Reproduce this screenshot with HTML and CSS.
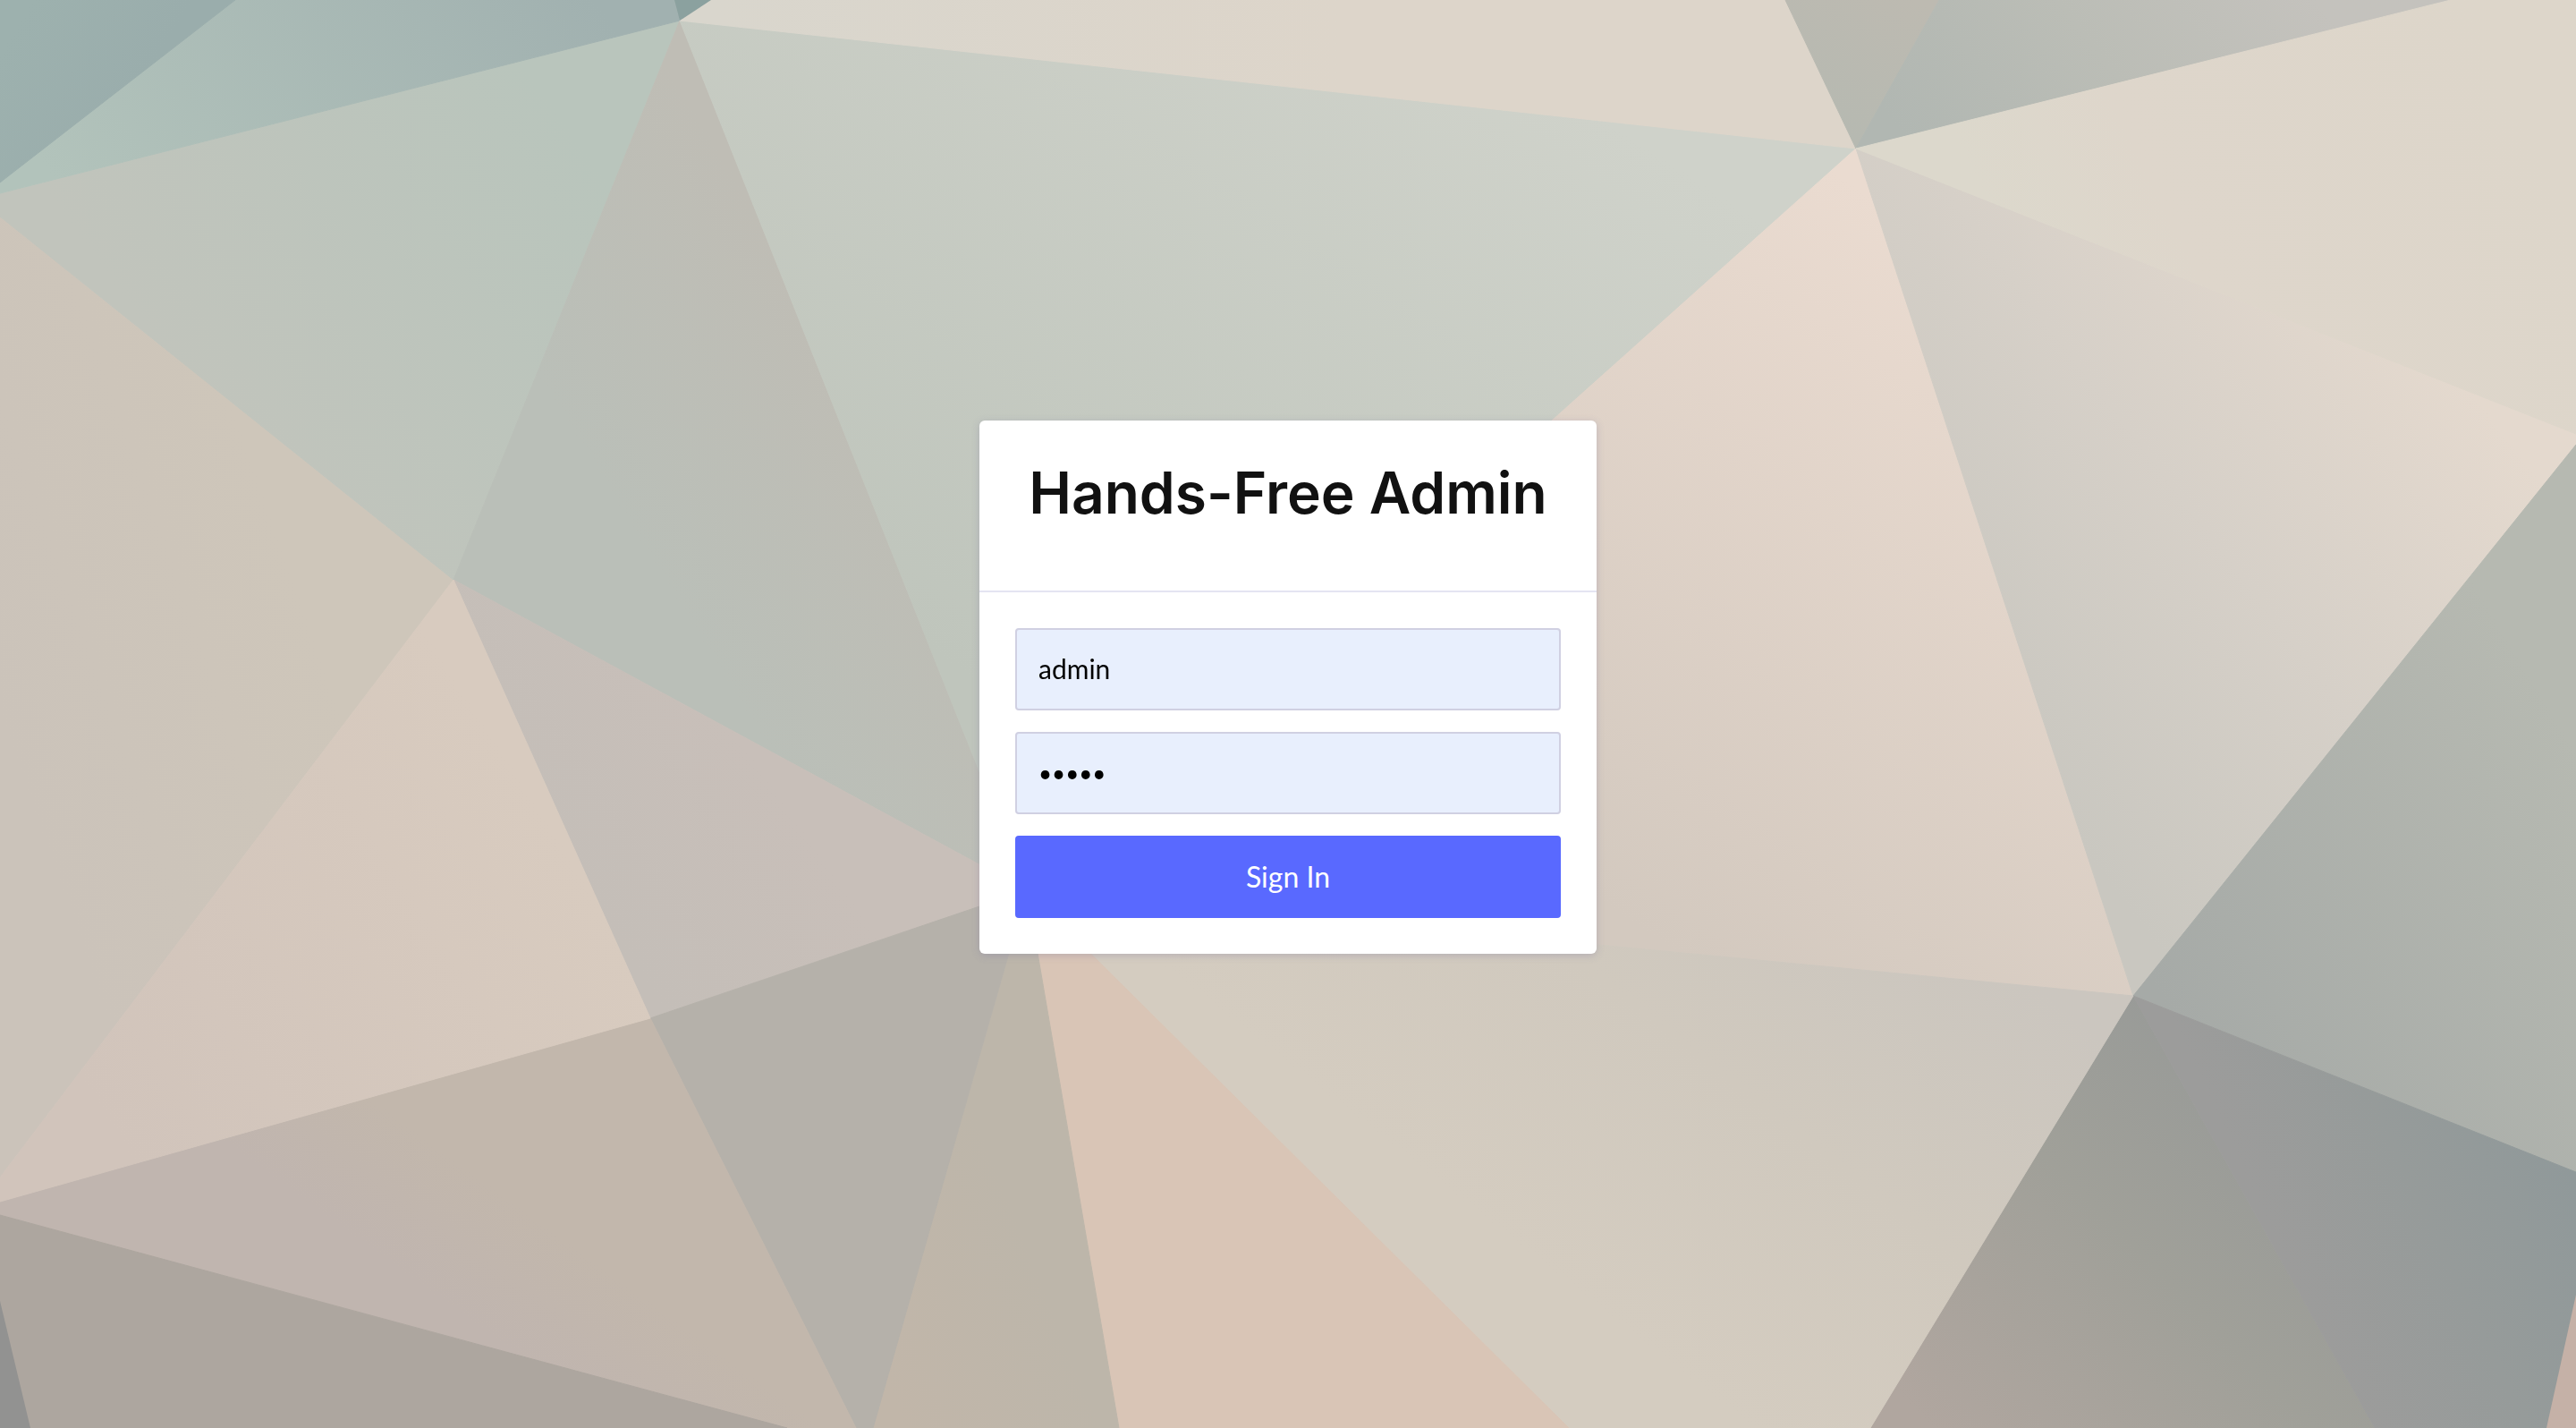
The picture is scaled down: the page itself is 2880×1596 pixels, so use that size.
FILE: index.html
```html
<!DOCTYPE html>
<html lang="en">
<head>
  <meta charset="utf-8">
  <meta name="viewport" content="width=device-width, initial-scale=1">
  <title>Hands-Free Admin</title>
  <link rel="stylesheet" href="styles.css">
</head>
<body>
  <svg class="backdrop" viewBox="0 0 2880 1596" preserveAspectRatio="xMidYMid slice" aria-hidden="true">
    <defs>
      <linearGradient id="g-a" gradientUnits="userSpaceOnUse" x1="0" y1="60" x2="130" y2="140"><stop offset="0" stop-color="#9db1ae"/><stop offset="1" stop-color="#9aadac"/></linearGradient>
      <linearGradient id="g-b" gradientUnits="userSpaceOnUse" x1="60" y1="200" x2="560" y2="-150"><stop offset="0" stop-color="#b2c3bb"/><stop offset="1" stop-color="#a1b1b0"/></linearGradient>
      <linearGradient id="g-d" gradientUnits="userSpaceOnUse" x1="200" y1="420" x2="620" y2="120"><stop offset="0" stop-color="#c1c4bc"/><stop offset="1" stop-color="#b9c5bc"/></linearGradient>
      <linearGradient id="g-e" gradientUnits="userSpaceOnUse" x1="0" y1="800" x2="340" y2="680"><stop offset="0" stop-color="#cbc3ba"/><stop offset="1" stop-color="#cec6ba"/></linearGradient>
      <linearGradient id="g-f" gradientUnits="userSpaceOnUse" x1="700" y1="580" x2="960" y2="420"><stop offset="0" stop-color="#babfb8"/><stop offset="1" stop-color="#bfbdb5"/></linearGradient>
      <linearGradient id="g-g" gradientUnits="userSpaceOnUse" x1="1000" y1="700" x2="1500" y2="-60"><stop offset="0" stop-color="#bfc5bc"/><stop offset="1" stop-color="#cfd2ca"/></linearGradient>
      <linearGradient id="g-h" gradientUnits="userSpaceOnUse" x1="800" y1="0" x2="1500" y2="0"><stop offset="0" stop-color="#d9d6cd"/><stop offset="1" stop-color="#ddd5ca"/></linearGradient>
      <linearGradient id="g-i" gradientUnits="userSpaceOnUse" x1="2060" y1="150" x2="2140" y2="0"><stop offset="0" stop-color="#b6b9b1"/><stop offset="1" stop-color="#bdbab1"/></linearGradient>
      <linearGradient id="g-j" gradientUnits="userSpaceOnUse" x1="2120" y1="140" x2="2480" y2="-140"><stop offset="0" stop-color="#b1b7b2"/><stop offset=".5" stop-color="#bbbdb6"/><stop offset="1" stop-color="#c4c2bd"/></linearGradient>
      <linearGradient id="g-k" gradientUnits="userSpaceOnUse" x1="2240" y1="260" x2="2760" y2="0"><stop offset="0" stop-color="#dcd8cc"/><stop offset=".3" stop-color="#ded6cb"/><stop offset="1" stop-color="#ddd6ca"/></linearGradient>
      <linearGradient id="g-l" gradientUnits="userSpaceOnUse" x1="2260" y1="860" x2="2780" y2="460"><stop offset="0" stop-color="#c9c7c0"/><stop offset=".5" stop-color="#d6d0c8"/><stop offset="1" stop-color="#e4d9ce"/></linearGradient>
      <linearGradient id="g-m" gradientUnits="userSpaceOnUse" x1="1780" y1="1000" x2="2240" y2="320"><stop offset="0" stop-color="#d3c9bf"/><stop offset="1" stop-color="#eadbd0"/></linearGradient>
      <linearGradient id="g-n" gradientUnits="userSpaceOnUse" x1="2420" y1="1120" x2="2880" y2="840"><stop offset="0" stop-color="#a6aaa7"/><stop offset="1" stop-color="#b6b9b1"/></linearGradient>
      <linearGradient id="g-o" gradientUnits="userSpaceOnUse" x1="2560" y1="1420" x2="2860" y2="1280"><stop offset="0" stop-color="#9c9c9b"/><stop offset=".5" stop-color="#969b9a"/><stop offset="1" stop-color="#90999a"/></linearGradient>
      <linearGradient id="g-p" gradientUnits="userSpaceOnUse" x1="2160" y1="1596" x2="2520" y2="1240"><stop offset="0" stop-color="#b0a69f"/><stop offset=".6" stop-color="#a0a099"/><stop offset="1" stop-color="#999b98"/></linearGradient>
      <linearGradient id="g-q" gradientUnits="userSpaceOnUse" x1="1760" y1="1440" x2="2120" y2="980"><stop offset="0" stop-color="#d4ccc0"/><stop offset=".5" stop-color="#d0c9be"/><stop offset="1" stop-color="#cbc6bf"/></linearGradient>
      <linearGradient id="g-s" gradientUnits="userSpaceOnUse" x1="1010" y1="1596" x2="1200" y2="1520"><stop offset="0" stop-color="#c1b6a9"/><stop offset="1" stop-color="#bdb6aa"/></linearGradient>
      <linearGradient id="g-u" gradientUnits="userSpaceOnUse" x1="680" y1="1040" x2="880" y2="900"><stop offset="0" stop-color="#c4beb8"/><stop offset="1" stop-color="#c8bfb9"/></linearGradient>
      <linearGradient id="g-v" gradientUnits="userSpaceOnUse" x1="100" y1="1220" x2="600" y2="900"><stop offset="0" stop-color="#d1c4bb"/><stop offset="1" stop-color="#d8cbbf"/></linearGradient>
      <linearGradient id="g-w" gradientUnits="userSpaceOnUse" x1="420" y1="1400" x2="500" y2="1290"><stop offset="0" stop-color="#c0b5af"/><stop offset="1" stop-color="#c2b7ac"/></linearGradient>
    </defs>
    <g stroke-width="1" stroke-linejoin="round">
      <path fill="url(#g-e)" stroke="url(#g-e)" d="M0 242 507 648 0 1316z"/>
      <path fill="url(#g-d)" stroke="url(#g-d)" d="M0 216 760 23 507 648 0 242z"/>
      <path fill="url(#g-b)" stroke="url(#g-b)" d="M263 0H754L760 23 0 216V204z"/>
      <path fill="url(#g-a)" stroke="url(#g-a)" d="M0 0H263L0 204z"/>
      <path fill="url(#g-f)" stroke="url(#g-f)" d="M760 23 1148 995 507 648z"/>
      <path fill="url(#g-g)" stroke="url(#g-g)" d="M760 23 2075 166 1148 995z"/>
      <path fill="url(#g-h)" stroke="url(#g-h)" d="M795 0H1996L2075 166 760 23z"/>
      <path fill="#8ba19f" d="M754 0H795L760 23z"/>
      <path fill="url(#g-i)" stroke="url(#g-i)" d="M1996 0H2168L2075 166z"/>
      <path fill="url(#g-j)" stroke="url(#g-j)" d="M2168 0H2740L2075 166z"/>
      <path fill="url(#g-m)" stroke="url(#g-m)" d="M2075 166 2385 1113 1148 995z"/>
      <path fill="url(#g-l)" stroke="url(#g-l)" d="M2075 166 2880 485V497L2385 1113z"/>
      <path fill="url(#g-k)" stroke="url(#g-k)" d="M2740 0H2880V485L2075 166z"/>
      <path fill="url(#g-n)" stroke="url(#g-n)" d="M2880 497V1310L2385 1113z"/>
      <path fill="url(#g-p)" stroke="url(#g-p)" d="M2385 1113 2655 1596H2091z"/>
      <path fill="url(#g-o)" stroke="url(#g-o)" d="M2385 1113 2880 1310V1596H2655z"/>
      <path fill="#c5b1a7" d="M2880 1447V1596H2847z"/>
      <path fill="url(#g-q)" stroke="url(#g-q)" d="M1148 995 2385 1113 2091 1596H1754z"/>
      <path fill="#d9c5b6" stroke="#d9c5b6" d="M1148 995 1754 1596H1251z"/>
      <path fill="url(#g-s)" stroke="url(#g-s)" d="M1148 995 1251 1596H976z"/>
      <path fill="url(#g-u)" stroke="url(#g-u)" d="M507 648 1148 995 727 1138z"/>
      <path fill="#b5b1aa" stroke="#b5b1aa" d="M727 1138 1148 995 976 1596H957z"/>
      <path fill="url(#g-w)" stroke="url(#g-w)" d="M0 1343 727 1138 957 1596H880L0 1358z"/>
      <path fill="url(#g-v)" stroke="url(#g-v)" d="M507 648 727 1138 0 1343V1316z"/>
      <path fill="#ada69f" stroke="#ada69f" d="M0 1358 880 1596H0z"/>
      <path fill="#929291" d="M0 1454 34 1596H0z"/>
    </g>
  </svg>

  <main class="login">
    <header class="login-header">
      <h1 class="login-title">Hands-Free Admin</h1>
    </header>
    <form class="login-form">
      <input class="field" type="text" name="username" value="admin" aria-label="Username" autocomplete="username">
      <input class="field field-password" type="password" name="password" value="admin" aria-label="Password" autocomplete="current-password">
      <button class="submit" type="submit">Sign In</button>
    </form>
  </main>
</body>
</html>
```
FILE: styles.css
```css
* {
  box-sizing: border-box;
}

body {
  margin: 0;
  min-height: 100vh;
  padding: 40px 20px 100px;
  display: flex;
  align-items: center;
  justify-content: center;
  background: #c9c4bb;
  font-family: Lato, "Liberation Sans", sans-serif;
}

.backdrop {
  position: fixed;
  inset: 0;
  width: 100%;
  height: 100%;
}

.login {
  position: relative;
  width: 100%;
  max-width: 690px;
  background: #fff;
  border-radius: 6px;
  box-shadow: 0 2px 8px rgba(120, 115, 160, 0.3);
}

.login-header {
  padding: 40px 40px 68px;
  border-bottom: 2px solid #e4e4f2;
}

.login-title {
  margin: 0;
  font-family: Inter, "Liberation Sans", sans-serif;
  font-size: 64px;
  line-height: 82px;
  font-weight: 600;
  text-align: center;
  color: #111;
}

.login-form {
  display: flex;
  flex-direction: column;
  gap: 24px;
  padding: 40px;
}

.field,
.submit {
  width: 100%;
  height: 92px;
  border-radius: 4px;
  font-family: inherit;
}

.field {
  padding: 0 24px 2px;
  border: 2px solid #d0d0e2;
  background: #e8effd;
  font-size: 30px;
  color: #000;
}

.field-password {
  padding-bottom: 0;
  font-size: 26px;
}

.submit {
  padding: 0 24px 2px;
  border: 0;
  background: #5969ff;
  font-size: 32px;
  color: #fff;
  cursor: pointer;
}
```
